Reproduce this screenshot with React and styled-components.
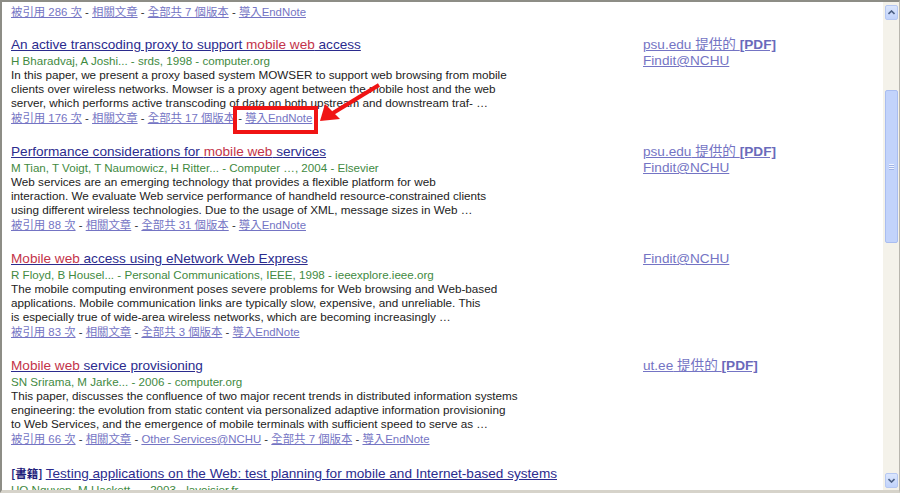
import React from 'react';
import styled, { createGlobalStyle } from 'styled-components';

const GlobalStyle = createGlobalStyle`
  html, body {
    margin: 0;
    padding: 0;
    background: #ffffff;
  }
`;

const Frame = styled.div`
  position: relative;
  width: 900px;
  height: 493px;
  box-sizing: border-box;
  border-top: 2px solid #8d8d86;
  border-left: 2px solid #8d8d86;
  border-bottom: 3px solid #d6d3ca;
  border-right: 1px solid #b8b6ae;
  display: flex;
  overflow: hidden;
  background: #fff;
  font-family: "Liberation Sans", Arial, "Noto Sans CJK TC", sans-serif;
`;

const Content = styled.div`
  flex: 1;
  overflow: hidden;
  padding: 2px 0 0 9px;
`;

const Result = styled.div`
  display: grid;
  grid-template-columns: 632px 1fr;
  margin-bottom: ${(p) => (p.$tight ? '17px' : '18px')};
`;

const Main = styled.div`
  display: flex;
  flex-direction: column;
`;

const Side = styled.div`
  display: flex;
  flex-direction: column;
`;

const Title = styled.div`
  font-size: 13.6px;
  line-height: 16px;
  white-space: nowrap;
  color: #2b2b8e;
`;

const TitleLink = styled.a`
  color: #2b2b8e;
  text-decoration: underline;
`;

const Hit = styled.span`
  color: #c3334a;
`;

const Tag = styled.span`
  font-family: "Noto Sans CJK TC", sans-serif;
  font-weight: bold;
  font-size: 11.5px;
  color: #1d1d7a;
  margin-right: 3px;
`;

const Authors = styled.div`
  font-size: 11.6px;
  line-height: 15px;
  color: #3f8a3f;
  white-space: nowrap;
`;

const Snippet = styled.div`
  font-size: 11.7px;
  line-height: 14px;
  color: #222;
  white-space: nowrap;
`;

const Links = styled.div`
  font-size: 11.4px;
  line-height: 16px;
  color: #333;
  white-space: nowrap;
`;

const SmallLink = styled.a`
  color: #7474c4;
  text-decoration: underline;
`;

const SideLink = styled.a`
  font-size: 13.6px;
  line-height: 16px;
  color: #7474c4;
  text-decoration: underline;
  white-space: nowrap;
  b {
    font-weight: bold;
    color: #6a6abb;
  }
`;

const Scrollbar = styled.div`
  width: 16px;
  background: #f4f2ea;
  display: flex;
  flex-direction: column;
  align-items: center;
  padding: 3px 0 2px;
  box-sizing: border-box;
`;

const ArrowButton = styled.div`
  width: 13px;
  height: 15px;
  border-radius: 2px;
  background: linear-gradient(#dbe6fd, #c1d3fb);
  border: 1px solid #b6c8f2;
  box-sizing: border-box;
  display: flex;
  align-items: center;
  justify-content: center;
`;

const Track = styled.div`
  flex: 1;
  width: 100%;
  display: flex;
  flex-direction: column;
  align-items: center;
  padding-top: 70px;
`;

const Thumb = styled.div`
  width: 13px;
  height: 153px;
  border-radius: 2px;
  background: #c2d3fb;
  border: 1px solid #a9bdf0;
  box-sizing: border-box;
  display: flex;
  align-items: center;
  justify-content: center;
`;

const Grip = styled.div`
  width: 5px;
  height: 6px;
  background: repeating-linear-gradient(#eef3ff 0 1px, #9fb3e6 1px 2px);
`;

const Overlay = styled.svg`
  position: absolute;
  left: -2px;
  top: -2px;
  pointer-events: none;
`;

const results = [
  {
    title: ['An active transcoding proxy to support ', 'mobile web', ' access'],
    authors: 'H Bharadvaj, A Joshi... - srds, 1998 - computer.org',
    snippet: [
      'In this paper, we present a proxy based system MOWSER to support web browsing from mobile',
      'clients over wireless networks. Mowser is a proxy agent between the mobile host and the web',
      'server, which performs active transcoding of data on both upstream and downstream traf- …',
    ],
    links: ['被引用 176 次', '相關文章', '全部共 17 個版本', '導入EndNote'],
    side: [{ host: 'psu.edu' }, { text: 'Findit@NCHU' }],
  },
  {
    title: ['Performance considerations for ', 'mobile web', ' services'],
    authors: 'M Tian, T Voigt, T Naumowicz, H Ritter... - Computer …, 2004 - Elsevier',
    snippet: [
      'Web services are an emerging technology that provides a flexible platform for web',
      'interaction. We evaluate Web service performance of handheld resource-constrained clients',
      'using different wireless technologies. Due to the usage of XML, message sizes in Web …',
    ],
    links: ['被引用 88 次', '相關文章', '全部共 31 個版本', '導入EndNote'],
    side: [{ host: 'psu.edu' }, { text: 'Findit@NCHU' }],
  },
  {
    title: ['', 'Mobile web', ' access using eNetwork Web Express'],
    authors: 'R Floyd, B Housel... - Personal Communications, IEEE, 1998 - ieeexplore.ieee.org',
    snippet: [
      'The mobile computing environment poses severe problems for Web browsing and Web-based',
      'applications. Mobile communication links are typically slow, expensive, and unreliable. This',
      'is especially true of wide-area wireless networks, which are becoming increasingly …',
    ],
    links: ['被引用 83 次', '相關文章', '全部共 3 個版本', '導入EndNote'],
    side: [{ text: 'Findit@NCHU' }],
  },
  {
    title: ['', 'Mobile web', ' service provisioning'],
    authors: 'SN Srirama, M Jarke... - 2006 - computer.org',
    snippet: [
      'This paper, discusses the confluence of two major recent trends in distributed information systems',
      'engineering: the evolution from static content via personalized adaptive information provisioning',
      'to Web Services, and the emergence of mobile terminals with sufficient speed to serve as …',
    ],
    links: ['被引用 66 次', '相關文章', 'Other Services@NCHU', '全部共 7 個版本', '導入EndNote'],
    side: [{ host: 'ut.ee' }],
  },
  {
    tag: '[書籍]',
    title: ['Testing applications on the Web: test planning for mobile and Internet-based systems', '', ''],
    authors: 'HQ Nguyen, M Hackett... - 2003 - lavoisier.fr',
    snippet: [],
    links: [],
    side: [],
  },
];

const LinkRow = ({ items }) => (
  <Links>
    {items.map((l, i) => (
      <React.Fragment key={i}>
        {i > 0 && ' - '}
        <SmallLink>{l}</SmallLink>
      </React.Fragment>
    ))}
  </Links>
);

const ResultItem = ({ r }) => (
  <Result>
    <Main>
      <Title>
        {r.tag && <Tag>{r.tag}</Tag>}
        <TitleLink>
          {r.title[0]}
          {r.title[1] && <Hit>{r.title[1]}</Hit>}
          {r.title[2]}
        </TitleLink>
      </Title>
      <Authors>{r.authors}</Authors>
      {r.snippet.map((s, i) => (
        <Snippet key={i}>{s}</Snippet>
      ))}
      {r.links.length > 0 && <LinkRow items={r.links} />}
    </Main>
    <Side>
      {r.side.map((s, i) =>
        s.host ? (
          <SideLink key={i}>
            {s.host} 提供的 <b>[PDF]</b>
          </SideLink>
        ) : (
          <SideLink key={i}>{s.text}</SideLink>
        )
      )}
    </Side>
  </Result>
);

export default function App() {
  return (
    <>
      <GlobalStyle />
      <Frame>
        <Content>
          <Result $tight>
            <Main>
              <LinkRow items={['被引用 286 次', '相關文章', '全部共 7 個版本', '導入EndNote']} />
            </Main>
          </Result>
          {results.map((r, i) => (
            <ResultItem key={i} r={r} />
          ))}
        </Content>
        <Scrollbar>
          <ArrowButton>
            <svg width="7" height="5" viewBox="0 0 7 5">
              <path d="M0.5 4 L3.5 1 L6.5 4" fill="none" stroke="#4d6185" strokeWidth="1.6" />
            </svg>
          </ArrowButton>
          <Track>
            <Thumb>
              <Grip />
            </Thumb>
          </Track>
          <ArrowButton>
            <svg width="7" height="5" viewBox="0 0 7 5">
              <path d="M0.5 1 L3.5 4 L6.5 1" fill="none" stroke="#4d6185" strokeWidth="1.6" />
            </svg>
          </ArrowButton>
        </Scrollbar>
        <Overlay width="900" height="493">
          <rect x="235" y="108" width="81" height="24" fill="none" stroke="#f01414" strokeWidth="4" />
          <line x1="379" y1="85" x2="333" y2="113" stroke="#f01414" strokeWidth="4" />
          <polygon points="320,121 325,104 340,119" fill="#f01414" />
        </Overlay>
      </Frame>
    </>
  );
}
